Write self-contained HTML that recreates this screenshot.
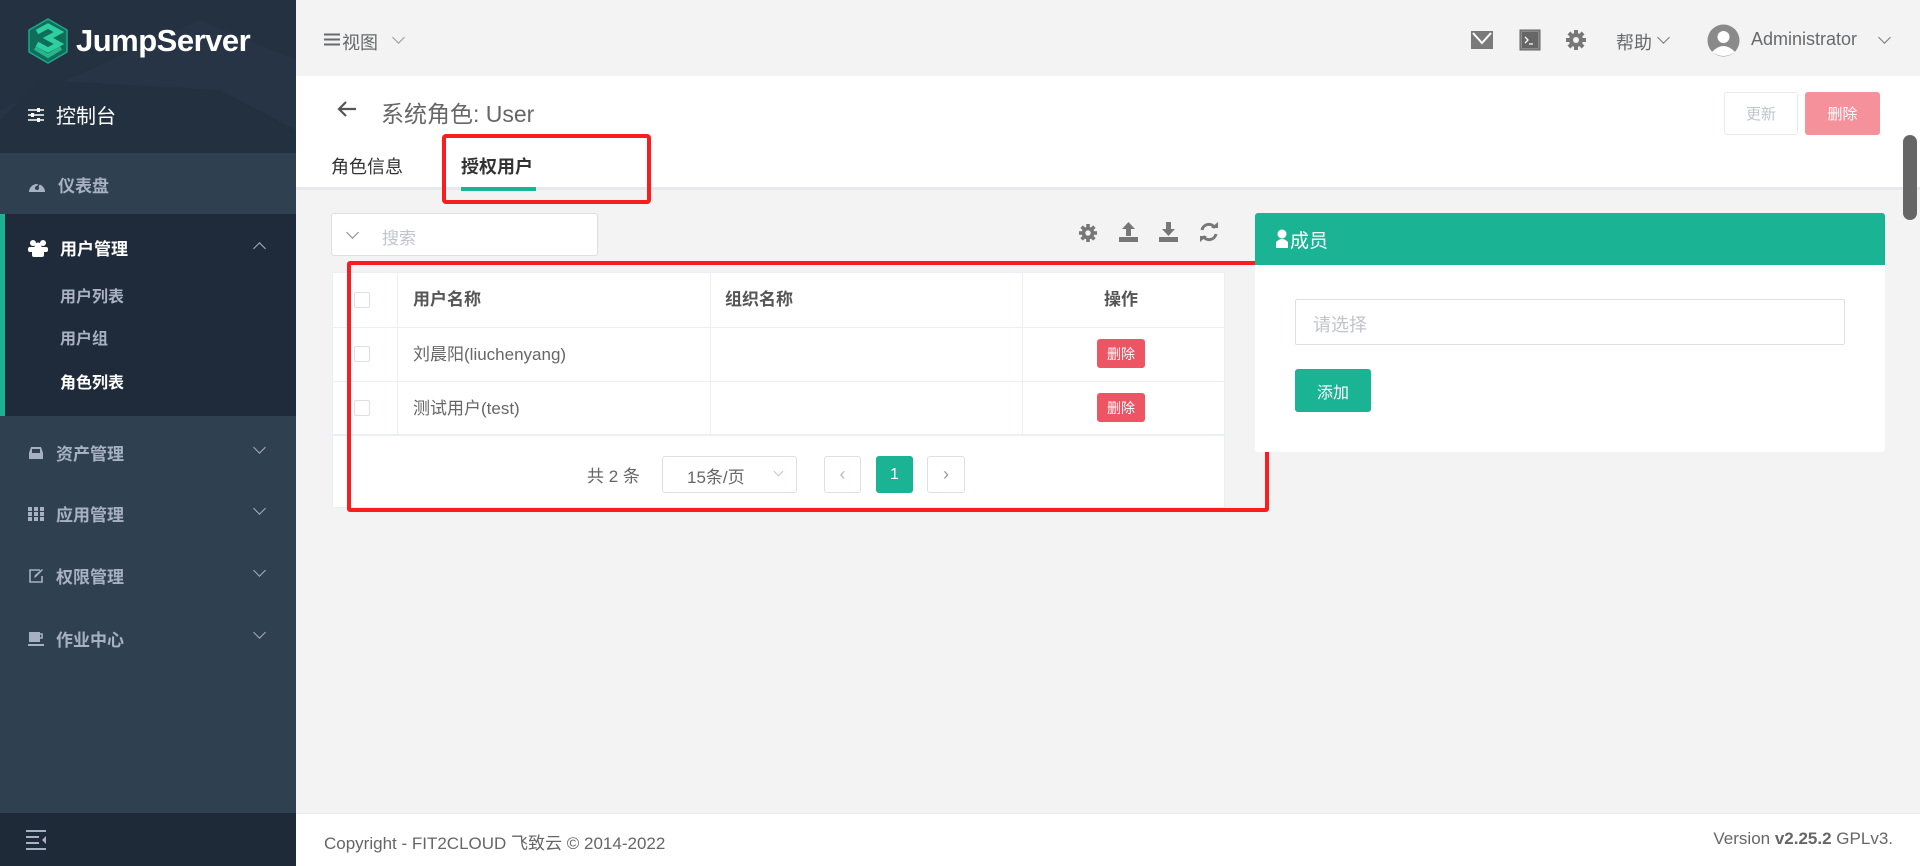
<!DOCTYPE html>
<html><head><meta charset="utf-8"><style>
*{box-sizing:border-box;margin:0;padding:0}
body{width:1920px;height:866px;overflow:hidden;background:#f3f3f4;font-family:"Liberation Sans","Noto Sans CJK SC",sans-serif;color:#676a6c;position:relative}
.abs{position:absolute}
.sb{left:0;top:0;width:296px;height:866px;background:#2f4050}
.menu{color:#a7b1c2;font-size:17px;font-weight:bold;display:flex;align-items:center}
.menu svg{margin-right:12px}
.chev{width:9px;height:9px;border-right:1.5px solid currentColor;border-bottom:1.5px solid currentColor;transform:rotate(45deg)}
.chevu{transform:rotate(-135deg)}
.t{white-space:nowrap}
.btn{display:flex;align-items:center;justify-content:center;border-radius:3px;font-size:15px}
.cb{width:16px;height:16px;border:1px solid #dcdfe6;border-radius:2px;background:#fff}
</style></head><body>
<!-- sidebar -->
<div class="abs sb"></div>
<div class="abs" style="left:0;top:0;width:296px;height:153px;background:#263445"></div>
<svg class="abs" style="left:0;top:0" width="296" height="153"><polygon points="0,0 296,0 296,60 200,20 0,110" fill="#243141"/><polygon points="40,80 220,90 296,130 296,153 0,153 0,120" fill="#22303f"/></svg>
<svg class="abs" style="left:27px;top:18px" width="42" height="46" viewBox="0 0 42 46"><polygon points="21,1 40,12 40,34 21,45 2,34 2,12" fill="#0f6d5c" stroke="#1fa88a" stroke-width="1.5"/><path d="M10,14 L21,8 L32,14 L21,20 L32,26 L21,32 L10,26" fill="none" stroke="#2fcf9f" stroke-width="5"/><path d="M8,30 L21,38 L34,30" fill="none" stroke="#27b58a" stroke-width="4"/></svg>
<div class="abs t" style="left:76px;top:23px;color:#fff;font-size:31px;font-weight:bold;letter-spacing:-0.5px">JumpServer</div>
<div class="abs menu" style="left:28px;top:100px;color:#fff;font-weight:normal;font-size:20px"><svg width="16" height="14"><path d="M0,2H16M0,7H16M0,12H16" stroke="#fff" stroke-width="1.6"/><rect x="9" y="0" width="3" height="4" fill="#fff"/><rect x="3" y="5" width="3" height="4" fill="#fff"/><rect x="9" y="10" width="3" height="4" fill="#fff"/></svg>控制台</div>
<div class="abs" style="left:0;top:153px;width:296px;height:61px;background:#2f4050"></div>
<div class="abs menu" style="left:28px;top:172px"><svg width="18" height="16"><path d="M1,15 A8,8 0 1 1 17,15Z" fill="#a7b1c2"/><circle cx="9" cy="11" r="2" fill="#2f4050"/><path d="M9,11 L12,5" stroke="#2f4050" stroke-width="1.5"/></svg>仪表盘</div>
<div class="abs" style="left:0;top:214px;width:296px;height:202px;background:#1f2b3a;border-left:5px solid #1ab394"></div>
<div class="abs menu" style="left:28px;top:235px;color:#fff"><svg width="20" height="18"><circle cx="5" cy="4" r="3" fill="#fff"/><circle cx="15" cy="4" r="3" fill="#fff"/><circle cx="10" cy="7" r="3.5" fill="#fff"/><rect x="0" y="8" width="20" height="5" rx="2" fill="#fff"/><rect x="4" y="11" width="12" height="7" rx="2" fill="#fff"/></svg>用户管理</div>
<div class="abs chev chevu" style="left:255px;top:244px;color:#a7b1c2"></div>
<div class="abs menu" style="left:60px;top:283px;font-size:16px">用户列表</div>
<div class="abs menu" style="left:60px;top:325px;font-size:16px">用户组</div>
<div class="abs menu" style="left:60px;top:369px;font-size:16px;color:#fff">角色列表</div>
<div class="abs menu" style="left:28px;top:440px"><svg width="16" height="14"><path d="M1,7 L3,1 H13 L15,7 V13 H1Z" fill="#a7b1c2"/><rect x="4" y="3" width="8" height="4" fill="#2f4050"/></svg>资产管理</div>
<div class="abs menu" style="left:28px;top:501px"><svg width="16" height="14"><g fill="#a7b1c2"><rect x="0" y="0" width="4" height="4"/><rect x="6" y="0" width="4" height="4"/><rect x="12" y="0" width="4" height="4"/><rect x="0" y="5" width="4" height="4"/><rect x="6" y="5" width="4" height="4"/><rect x="12" y="5" width="4" height="4"/><rect x="0" y="10" width="4" height="4"/><rect x="6" y="10" width="4" height="4"/><rect x="12" y="10" width="4" height="4"/></g></svg>应用管理</div>
<div class="abs menu" style="left:28px;top:563px"><svg width="16" height="16"><path d="M12,2 H2 V14 H14 V8" fill="none" stroke="#a7b1c2" stroke-width="1.6"/><path d="M6,10 L7,7 L14,1 L15,2 L8,9Z" fill="#a7b1c2"/></svg>权限管理</div>
<div class="abs menu" style="left:28px;top:626px"><svg width="16" height="16"><rect x="1" y="1" width="11" height="10" fill="#a7b1c2"/><path d="M12,3 h2 v4 h-2" fill="none" stroke="#a7b1c2" stroke-width="1.6"/><rect x="0" y="13" width="16" height="2" fill="#a7b1c2"/></svg>作业中心</div>
<div class="abs chev" style="left:255px;top:443px;color:#a7b1c2"></div>
<div class="abs chev" style="left:255px;top:504px;color:#a7b1c2"></div>
<div class="abs chev" style="left:255px;top:566px;color:#a7b1c2"></div>
<div class="abs chev" style="left:255px;top:628px;color:#a7b1c2"></div>
<div class="abs" style="left:0;top:813px;width:296px;height:53px;background:#1f2a38"></div>
<svg class="abs" style="left:26px;top:830px" width="22" height="20"><path d="M0,1H20M0,7H13M0,13H13M0,19H20" stroke="#a7b1c2" stroke-width="2"/><path d="M20,6 L16,10 L20,14Z" fill="#a7b1c2"/></svg>
<!-- topbar -->
<svg class="abs" style="left:324px;top:33px" width="16" height="13"><path d="M0,1.5H16M0,6.5H16M0,11.5H16" stroke="#676a6c" stroke-width="2"/></svg>
<div class="abs t" style="left:342px;top:29px;font-size:18px;color:#676a6c">视图</div>
<div class="abs chev" style="left:394px;top:33px;color:#999"></div>
<svg class="abs" style="left:1471px;top:31px" width="22" height="18"><rect width="22" height="18" fill="#7a7a7a"/><path d="M2,2 L11,12 L20,2" stroke="#fff" stroke-width="2" fill="none"/></svg>
<svg class="abs" style="left:1519px;top:29px" width="22" height="22"><rect x="1" y="1" width="20" height="20" fill="#888" stroke="#666"/><rect x="3" y="3" width="16" height="16" fill="#666"/><path d="M6,8 L9,11 L6,14 M10,15 H14" stroke="#fff" stroke-width="1.3" fill="none"/></svg>
<svg class="abs" style="left:1566px;top:30px" width="20" height="20" viewBox="0 0 20 20"><g fill="#777"><circle cx="10" cy="10" r="7"/><rect x="8" y="0" width="4" height="20"/><rect x="0" y="8" width="20" height="4"/><rect x="8" y="0" width="4" height="20" transform="rotate(45 10 10)"/><rect x="8" y="0" width="4" height="20" transform="rotate(-45 10 10)"/></g><circle cx="10" cy="10" r="3" fill="#f3f3f4"/></svg>
<div class="abs t" style="left:1616px;top:29px;font-size:18px">帮助</div>
<div class="abs chev" style="left:1659px;top:33px;color:#777"></div>
<svg class="abs" style="left:1707px;top:24px" width="33" height="33"><circle cx="16.5" cy="16.5" r="16" fill="#8a8a8a"/><circle cx="16.5" cy="13" r="6" fill="#fff"/><path d="M5,28 Q16.5,16 28,28 Q16.5,36 5,28Z" fill="#fff"/></svg>
<div class="abs t" style="left:1751px;top:29px;font-size:18px">Administrator</div>
<div class="abs chev" style="left:1880px;top:33px;color:#777"></div>
<!-- header card -->
<div class="abs" style="left:296px;top:76px;width:1624px;height:114px;background:#fff;border-bottom:3px solid #e7eaec"></div>
<svg class="abs" style="left:337px;top:100px" width="20" height="18"><path d="M19,9H2M9,2L2,9L9,16" stroke="#555" stroke-width="2.2" fill="none"/></svg>
<div class="abs t" style="left:381px;top:95px;font-size:23px;color:#666">系统角色: User</div>
<div class="abs btn" style="left:1724px;top:92px;width:74px;height:43px;border:1px solid #e7eaec;color:#c0c4cc">更新</div>
<div class="abs btn" style="left:1805px;top:92px;width:75px;height:43px;background:#f5919a;color:#fff">删除</div>
<div class="abs t" style="left:331px;top:153px;font-size:18px;color:#333">角色信息</div>
<div class="abs t" style="left:461px;top:153px;font-size:18px;color:#333;font-weight:bold">授权用户</div>
<div class="abs" style="left:461px;top:187px;width:75px;height:4px;background:#1ab394"></div>
<div class="abs" style="left:442px;top:134px;width:209px;height:70px;border:4px solid #f81e1e;border-radius:4px"></div>
<div class="abs" style="left:1903px;top:135px;width:14px;height:85px;background:#666;border-radius:7px"></div>
<!-- search -->
<div class="abs" style="left:331px;top:213px;width:267px;height:43px;background:#fff;border:1px solid #dcdfe6;border-radius:3px"></div>
<div class="abs chev" style="left:348px;top:228px;color:#888"></div>
<div class="abs t" style="left:382px;top:224px;font-size:17px;color:#c0c4cc">搜索</div>
<svg class="abs" style="left:1079px;top:224px" width="18" height="18" viewBox="0 0 20 20"><g fill="#777"><circle cx="10" cy="10" r="7"/><rect x="8" y="0" width="4" height="20"/><rect x="0" y="8" width="20" height="4"/><rect x="8" y="0" width="4" height="20" transform="rotate(45 10 10)"/><rect x="8" y="0" width="4" height="20" transform="rotate(-45 10 10)"/></g><circle cx="10" cy="10" r="3" fill="#f3f3f4"/></svg>
<svg class="abs" style="left:1119px;top:222px" width="19" height="20"><path d="M9.5,0 L16,7 H12 V14 H7 V7 H3Z" fill="#777"/><rect x="0" y="15" width="19" height="5" fill="#777"/></svg>
<svg class="abs" style="left:1159px;top:222px" width="19" height="20"><path d="M9.5,14 L16,7 H12 V0 H7 V7 H3Z" fill="#777"/><rect x="0" y="15" width="19" height="5" fill="#777"/></svg>
<svg class="abs" style="left:1199px;top:222px" width="20" height="20"><path d="M16,6 A7,7 0 0 0 3,8 M4,14 A7,7 0 0 0 17,12" stroke="#777" stroke-width="3" fill="none"/><path d="M12,6 H19 V0Z M8,14 H1 V20Z" fill="#777"/></svg>
<!-- table -->
<div class="abs" style="left:332px;top:272px;width:893px;height:236px;background:#fff;border:1px solid #ebeef5"></div>
<div class="abs" style="left:332px;top:327px;width:893px;height:1px;background:#ebeef5"></div>
<div class="abs" style="left:332px;top:381px;width:893px;height:1px;background:#ebeef5"></div>
<div class="abs" style="left:332px;top:434px;width:893px;height:2px;background:#ebeef5"></div>
<div class="abs" style="left:397px;top:272px;width:1px;height:163px;background:#ebeef5"></div>
<div class="abs" style="left:710px;top:272px;width:1px;height:163px;background:#ebeef5"></div>
<div class="abs" style="left:1022px;top:272px;width:1px;height:163px;background:#ebeef5"></div>
<div class="abs cb" style="left:354px;top:292px"></div>
<div class="abs cb" style="left:354px;top:346px"></div>
<div class="abs cb" style="left:354px;top:400px"></div>
<div class="abs t" style="left:413px;top:285px;font-size:17px;font-weight:bold;color:#555">用户名称</div>
<div class="abs t" style="left:725px;top:285px;font-size:17px;font-weight:bold;color:#555">组织名称</div>
<div class="abs t" style="left:1104px;top:285px;font-size:17px;font-weight:bold;color:#555">操作</div>
<div class="abs t" style="left:413px;top:340px;font-size:17px;color:#666">刘晨阳(liuchenyang)</div>
<div class="abs t" style="left:413px;top:394px;font-size:17px;color:#666">测试用户(test)</div>
<div class="abs btn" style="left:1097px;top:339px;width:48px;height:29px;background:#ed5565;color:#fff;font-size:14px">删除</div>
<div class="abs btn" style="left:1097px;top:393px;width:48px;height:29px;background:#ed5565;color:#fff;font-size:14px">删除</div>
<div class="abs t" style="left:587px;top:462px;font-size:17px;color:#666">共 2 条</div>
<div class="abs" style="left:662px;top:456px;width:135px;height:37px;border:1px solid #dcdfe6;border-radius:3px;background:#fff"></div>
<div class="abs t" style="left:687px;top:463px;font-size:17px;color:#666">15条/页</div>
<div class="abs chev" style="left:775px;top:468px;color:#c0c4cc;width:7px;height:7px"></div>
<div class="abs btn" style="left:824px;top:456px;width:37px;height:37px;border:1px solid #dcdfe6;color:#bbb;font-size:18px">‹</div>
<div class="abs btn" style="left:876px;top:456px;width:37px;height:37px;background:#1ab394;color:#fff;font-size:16px">1</div>
<div class="abs btn" style="left:927px;top:456px;width:38px;height:37px;border:1px solid #dcdfe6;color:#999;font-size:18px">›</div>
<div class="abs" style="left:347px;top:261px;width:922px;height:251px;border:4px solid #f81e1e;border-radius:3px"></div>
<!-- right panel -->
<div class="abs" style="left:1255px;top:213px;width:630px;height:239px;background:#fff;border-radius:3px"></div>
<div class="abs" style="left:1255px;top:213px;width:630px;height:52px;background:#1ab394;border-radius:3px 3px 0 0"></div>
<svg class="abs" style="left:1276px;top:229px" width="12" height="19"><circle cx="6" cy="5" r="4.5" fill="#fff"/><path d="M0,19 V13 Q6,7 12,13 V19Z" fill="#fff"/></svg>
<div class="abs t" style="left:1290px;top:226px;font-size:19px;color:#fff">成员</div>
<div class="abs" style="left:1295px;top:299px;width:550px;height:46px;border:1px solid #dcdfe6;border-radius:2px"></div>
<div class="abs t" style="left:1313px;top:311px;font-size:18px;color:#c0c4cc">请选择</div>
<div class="abs btn" style="left:1295px;top:369px;width:76px;height:43px;background:#1ab394;color:#fff;font-size:16px">添加</div>
<!-- footer -->
<div class="abs" style="left:296px;top:813px;width:1624px;height:53px;background:#fff;border-top:1px solid #e7eaec"></div>
<div class="abs t" style="left:324px;top:829px;font-size:17px;color:#666">Copyright - FIT2CLOUD 飞致云 © 2014-2022</div>
<div class="abs t" style="right:27px;top:829px;font-size:17px;color:#666">Version <b>v2.25.2</b> GPLv3.</div>
</body></html>
